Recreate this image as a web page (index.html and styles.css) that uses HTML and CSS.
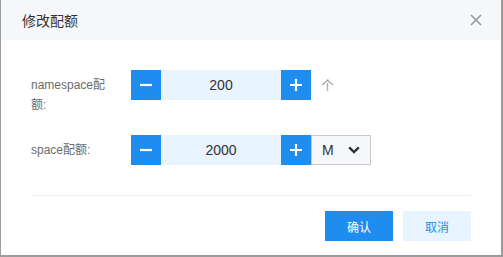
FILE: index.html
```html
<!DOCTYPE html>
<html lang="zh">
<head>
<meta charset="utf-8">
<link rel="stylesheet" href="styles.css">
</head>
<body>
<div class="dialog">
  <div class="dialog-header">
    <span class="dialog-title">修改配额</span>
    <svg class="close" width="12" height="12" viewBox="0 0 12 12"><path d="M1 1L11 11M11 1L1 11" stroke="#9a9a9a" stroke-width="1.6" fill="none"/></svg>
  </div>
  <div class="dialog-body">
    <div class="form-row first">
      <div class="label">namespace配额:</div>
      <div class="stepper">
        <button class="step"><svg width="12" height="12" viewBox="0 0 12 12"><path d="M0 6H12" stroke="#fff" stroke-width="2.2"/></svg></button>
        <div class="value">200</div>
        <button class="step"><svg width="12" height="12" viewBox="0 0 12 12"><path d="M0 6H12M6 0V12" stroke="#fff" stroke-width="2.2"/></svg></button>
      </div>
      <span class="unit">个</span>
    </div>
    <div class="form-row">
      <div class="label">space配额:</div>
      <div class="stepper">
        <button class="step"><svg width="12" height="12" viewBox="0 0 12 12"><path d="M0 6H12" stroke="#fff" stroke-width="2.2"/></svg></button>
        <div class="value">2000</div>
        <button class="step"><svg width="12" height="12" viewBox="0 0 12 12"><path d="M0 6H12M6 0V12" stroke="#fff" stroke-width="2.2"/></svg></button>
      </div>
      <div class="select">
        <span>M</span>
        <svg width="12" height="8" viewBox="0 0 12 8"><path d="M1.2 1.4L6 6L10.8 1.4" stroke="#333" stroke-width="2.4" fill="none"/></svg>
      </div>
    </div>
  </div>
  <div class="dialog-footer">
    <button class="btn primary">确认</button>
    <button class="btn secondary">取消</button>
  </div>
</div>
</body>
</html>
```

FILE: styles.css
```css
html, body {
  margin: 0;
  padding: 0;
}
body {
  background: #9b9b9b;
  width: 503px;
  height: 257px;
  overflow: hidden;
  font-family: "Liberation Sans", "Noto Sans CJK SC", sans-serif;
}
.dialog {
  margin-left: 1px;
  width: 500px;
  height: 255px;
  background: #fff;
  display: flex;
  flex-direction: column;
}
.dialog-header {
  height: 40px;
  background: #f5f7fa;
  display: flex;
  align-items: center;
  justify-content: space-between;
  padding: 0 19px 0 21px;
  box-sizing: border-box;
}
.dialog-title {
  font-size: 14px;
  color: #333;
  font-family: "Noto Sans CJK SC", sans-serif;
}
.close {
  display: block;
}
.dialog-body {
  padding: 30px 30px 0 30px;
}
.form-row {
  display: flex;
  align-items: flex-start;
}
.form-row.first {
  margin-bottom: 20px;
}
.label {
  width: 80px;
  padding-top: 5px;
  margin-right: 20px;
  font-size: 12px;
  line-height: 20px;
  color: #6b6b6b;
  word-break: break-all;
  font-family: "Liberation Sans", "Noto Sans CJK SC", sans-serif;
}
.stepper {
  display: flex;
  height: 30px;
}
.step {
  width: 30px;
  height: 30px;
  border: none;
  padding: 0;
  margin: 0;
  background: #1f8cef;
  display: flex;
  align-items: center;
  justify-content: center;
}
.step svg {
  display: block;
}
.value {
  width: 120px;
  height: 30px;
  background: #e8f4ff;
  font-size: 14px;
  color: #333;
  display: flex;
  align-items: center;
  justify-content: center;
}
.unit {
  margin-left: 10px;
  line-height: 30px;
  font-size: 13px;
  color: #999;
  font-family: "Noto Sans CJK SC", sans-serif;
}
.select {
  width: 60px;
  height: 30px;
  box-sizing: border-box;
  border: 1px solid #c9c9c9;
  background: #f5f7fa;
  display: flex;
  align-items: center;
  justify-content: space-between;
  padding: 0 10px 0 10px;
  font-size: 14px;
  color: #333;
}
.select svg {
  display: block;
}
.dialog-footer {
  margin: 30px 30px 0 30px;
  border-top: 1px solid #ebebf2;
  padding-top: 15px;
  display: flex;
  justify-content: flex-end;
  gap: 10px;
}
.btn {
  width: 68px;
  height: 30px;
  border: none;
  padding: 0;
  margin: 0;
  font-size: 12px;
  font-family: "Noto Sans CJK SC", sans-serif;
}
.btn.primary {
  background: #1f8cef;
  color: #fff;
}
.btn.secondary {
  background: #e8f4ff;
  color: #1f8cef;
}
```
